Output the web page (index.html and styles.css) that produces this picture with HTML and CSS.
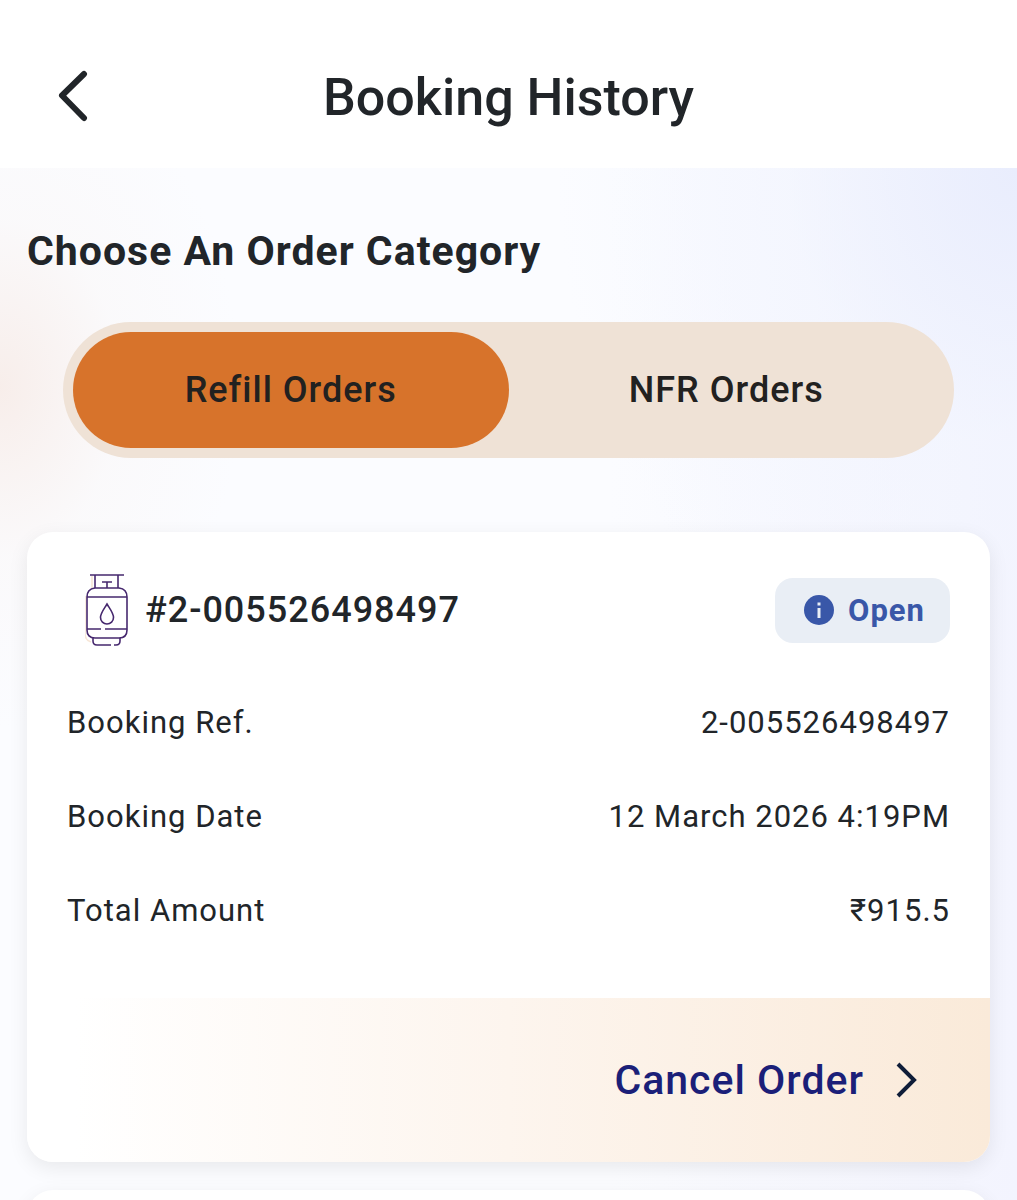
FILE: index.html
```html
<!DOCTYPE html>
<html lang="en">
<head>
    <meta charset="UTF-8">
    <meta name="viewport" content="width=device-width, initial-scale=1.0">
    <title>Booking History</title>
    <link rel="stylesheet" href="styles.css">
</head>
<body>

<header class="topbar">
    <button type="button" class="back" aria-label="Back">
        <svg width="32" height="52" viewBox="0 0 32 52" fill="none" stroke="#212529" stroke-width="6" stroke-linecap="round" stroke-linejoin="round">
            <path d="M27 4 5 25.500 27 48"/>
        </svg>
    </button>
    <h1>Booking History</h1>
</header>

<main class="content">
    <h2>Choose An Order Category</h2>

    <div class="tabs" role="tablist">
        <button type="button" class="tab active" role="tab" aria-selected="true">Refill Orders</button>
        <button type="button" class="tab" role="tab" aria-selected="false">NFR Orders</button>
    </div>

    <!-- Order card -->
    <article class="card">
        <div class="card-head">
            <svg class="cylinder" width="44" height="74" viewBox="0 0 44 74" fill="none" stroke-width="1.600">
                <g stroke="#f7e6d6" transform="translate(-2 1)">
                    <path d="M9 2v12M2 22v38q0 6 6 8"/>
                </g>
                <g stroke="#46286e">
                    <path d="M5 2h34M10 2v13M33 2v13M17 9h10M22 9v6"/>
                    <path d="M10 15h24q8 1 8 9v33q0 8-8 8H10q-8 0-8-8V24q0-8 8-9z"/>
                    <path d="M2 24h40M2 56h14M20 56h22"/>
                    <path d="M22 31c-3 5-6.500 9-6.500 13.500a6.500 6.500 0 0 0 13 0c0-4.500-3.500-8.500-6.500-13.500z"/>
                    <path d="M8 65v3q0 4 4 4h14M29 72h2q4 0 4-4v-3"/>
                </g>
            </svg>
            <h3>#2-005526498497</h3>
            <span class="status">
                <svg width="30" height="30" viewBox="0 0 30 30">
                    <circle cx="15" cy="15" r="15" fill="#3957a8"/>
                    <path d="M13.500 7.500h3v3h-3zM13.500 13h3v10h-3z" fill="#e9eef5"/>
                </svg>
                Open
            </span>
        </div>
        <dl class="details">
            <div class="row"><dt>Booking Ref.</dt><dd>2-005526498497</dd></div>
            <div class="row"><dt>Booking Date</dt><dd>12 March 2026 4:19PM</dd></div>
            <div class="row"><dt>Total Amount</dt><dd>₹915.5</dd></div>
        </dl>
        <div class="card-foot">
            <button type="button" class="cancel">
                Cancel Order
                <svg width="22" height="36" viewBox="0 0 22 36" fill="none" stroke="#0f1d38" stroke-width="4">
                    <path d="M2 2 18 18 2 34"/>
                </svg>
            </button>
        </div>
    </article>

    <!-- Next order -->
    <article class="card next"></article>
</main>

</body>
</html>
```

FILE: styles.css
```css
* {
    box-sizing: border-box;
}
body {
    display: flex;
    flex-direction: column;
    height: 100vh;
    margin: 0;
    font-family: Roboto, sans-serif;
    color: #212529;
    background-color: #fff;
}
h1, h2, h3, dl, dd {
    margin: 0;
}
button {
    padding: 0;
    border: 0;
    background: none;
    font-family: inherit;
    color: inherit;
    cursor: pointer;
}
svg {
    display: block;
    flex: none;
}

/* Top bar */
.topbar {
    display: grid;
    grid-template-columns: 92px 1fr 92px;
    flex: none;
    padding: 56px 27px 28px;
}
.back {
    display: flex;
    align-items: center;
    justify-content: center;
    height: 80px;
}
.topbar h1 {
    font-size: 52px;
    line-height: 84px;
    font-weight: 500;
    text-align: center;
}

/* Page */
.content {
    flex: 1;
    min-height: 0;
    padding: 53px 27px 28px;
    overflow-y: auto;
    scrollbar-width: none;
    background:
        radial-gradient(ellipse 240px 340px at 0 220px, rgba(247, 236, 232, 0.9), rgba(250, 247, 247, 0.5) 50%, rgba(251, 252, 255, 0)),
        radial-gradient(ellipse 460px 560px at 100% 0, #e9edfd, rgba(242, 245, 254, 0.6) 50%, rgba(251, 252, 255, 0)),
        linear-gradient(to right, #fbfcff 60%, #f3f4fe);
}
.content h2 {
    font-size: 41px;
    line-height: 60px;
    font-weight: 700;
    letter-spacing: 1px;
}

/* Order category switch */
.tabs {
    display: flex;
    margin: 41px 36px 74px;
    padding: 10px;
    border-radius: 68px;
    background-color: #efe2d6;
}
.tab {
    flex: 1;
    height: 116px;
    border-radius: 58px;
    font-size: 36px;
    font-weight: 500;
    letter-spacing: 1px;
    color: #222120;
}
.tab.active {
    background-color: #d7732b;
}

/* Order card */
.card {
    margin-bottom: 28px;
    border-radius: 26px;
    background-color: #fff;
    box-shadow: 0 6px 20px rgba(0, 0, 0, 0.08);
    overflow: hidden;
}
.card-head {
    display: flex;
    align-items: center;
    padding: 41px 40px 29px 58px;
}
.card-head h3 {
    flex: 1;
    margin-left: 16px;
    font-size: 36px;
    font-weight: 500;
    letter-spacing: 1px;
}
.status {
    display: flex;
    align-items: center;
    gap: 14px;
    height: 65px;
    padding: 0 25px 0 29px;
    border-radius: 18px;
    background-color: #e9eef5;
    font-size: 31px;
    font-weight: 700;
    letter-spacing: 1px;
    color: #3957a8;
}
.details {
    padding: 0 40px 40px;
}
.row {
    display: flex;
    justify-content: space-between;
    font-size: 31px;
    line-height: 94px;
    letter-spacing: 1px;
}
.card-foot {
    display: flex;
    justify-content: flex-end;
    padding: 0 72px;
    background: linear-gradient(to right, #fff 5%, #fdf5ee 50%, #faead9);
}
.cancel {
    display: flex;
    align-items: center;
    gap: 32px;
    height: 164px;
    font-size: 41px;
    font-weight: 500;
    letter-spacing: 1px;
    color: #1b1f78;
}
.next {
    min-height: 630px;
}
```
